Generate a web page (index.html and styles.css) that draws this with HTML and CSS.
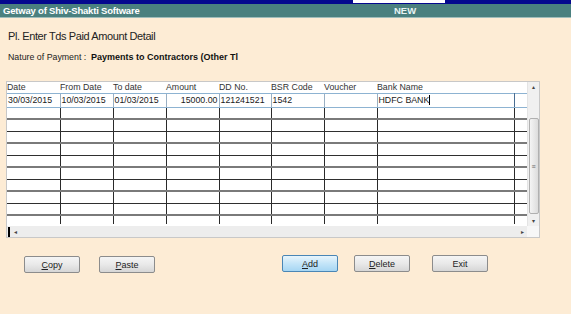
FILE: index.html
```html
<!DOCTYPE html>
<html>
<head>
<meta charset="utf-8">
<link rel="stylesheet" href="styles.css">
</head>
<body>
<div class="topstrip"><div class="topbox"></div></div>
<div class="titlebar">
  <span class="apptitle">Getway of Shiv-Shakti Software</span>
  <span class="mode">NEW</span>
</div>
<div class="content">
  <div class="heading">Pl. Enter Tds Paid Amount Detail</div>
  <div class="nature"><span class="nlabel">Nature of Payment :</span><span class="nvalue">Payments to Contractors (Other Tl</span></div>
  <div class="grid">
    <div class="gridmain">
      <div class="tablewrap">
        <table class="tbl">
          <colgroup>
            <col style="width:53px"><col style="width:53px"><col style="width:53px"><col style="width:53px"><col style="width:52px"><col style="width:53px"><col style="width:53px"><col style="width:137px"><col style="width:14px">
          </colgroup>
          <thead>
            <tr><th>Date</th><th>From Date</th><th>To date</th><th>Amount</th><th>DD No.</th><th>BSR Code</th><th>Voucher</th><th>Bank Name</th><th></th></tr>
          </thead>
          <tbody>
            <tr class="sel"><td>30/03/2015</td><td>10/03/2015</td><td>01/03/2015</td><td class="num">15000.00</td><td>121241521</td><td>1542</td><td></td><td class="edit">HDFC BANK<span class="caret"></span></td><td class="edit2"></td></tr>
            <tr class="ra"><td></td><td></td><td></td><td></td><td></td><td></td><td></td><td></td><td></td></tr>
            <tr class="rb"><td></td><td></td><td></td><td></td><td></td><td></td><td></td><td></td><td></td></tr>
            <tr class="ra"><td></td><td></td><td></td><td></td><td></td><td></td><td></td><td></td><td></td></tr>
            <tr class="rb"><td></td><td></td><td></td><td></td><td></td><td></td><td></td><td></td><td></td></tr>
            <tr class="ra"><td></td><td></td><td></td><td></td><td></td><td></td><td></td><td></td><td></td></tr>
            <tr class="rb"><td></td><td></td><td></td><td></td><td></td><td></td><td></td><td></td><td></td></tr>
            <tr class="ra"><td></td><td></td><td></td><td></td><td></td><td></td><td></td><td></td><td></td></tr>
            <tr class="rb"><td></td><td></td><td></td><td></td><td></td><td></td><td></td><td></td><td></td></tr>
            <tr class="ra"><td></td><td></td><td></td><td></td><td></td><td></td><td></td><td></td><td></td></tr>
            <tr class="last"><td></td><td></td><td></td><td></td><td></td><td></td><td></td><td></td><td></td></tr>
          </tbody>
        </table>
      </div>
      <div class="vscroll">
        <div class="arrow up">&#9652;</div>
        <div class="vtrack"><div class="vthumb"><span class="grip">&#8801;</span></div></div>
        <div class="arrow down">&#9662;</div>
      </div>
    </div>
    <div class="hscroll">
      <span class="hmark"></span>
      <span class="harrow">&#9666;</span>
      <span class="hspacer"></span>
      <span class="harrow">&#9656;</span>
      <span class="corner"></span>
    </div>
  </div>
  <div class="buttons">
    <div class="btngroup left">
      <button class="btn"><u>C</u>opy</button>
      <button class="btn"><u>P</u>aste</button>
    </div>
    <div class="btngroup right">
      <button class="btn primary"><u>A</u>dd</button>
      <button class="btn"><u>D</u>elete</button>
      <button class="btn exit">Exit</button>
    </div>
  </div>
</div>
</body>
</html>
```
FILE: styles.css
```css
* { box-sizing: border-box; }
html, body { margin: 0; padding: 0; }
body {
  width: 571px;
  height: 314px;
  background: #fdecd5;
  font-family: "Liberation Sans", Arial, sans-serif;
  color: #1a1a1a;
  overflow: hidden;
}
.topstrip {
  height: 4px;
  background: #04088e;
  display: flex;
}
.topbox {
  margin-left: 353px;
  width: 92px;
  height: 3px;
  background: #ffffff;
}
.titlebar {
  height: 14px;
  background: #4a807f;
  border-bottom: 1px solid #9fbdbb;
  display: flex;
  align-items: center;
  color: #ffffff;
  font-family: "Liberation Sans", Arial, sans-serif;
  font-weight: bold;
  font-size: 9.5px;
}
.apptitle { margin-left: 3px; width: 391px; letter-spacing: -0.2px; }
.mode { color: #e8f4f4; }
.content { padding: 12px 0 0 0; }
.heading {
  margin-left: 8px;
  font-size: 11px;
  letter-spacing: -0.4px;
  color: #222;
  height: 13px;
  line-height: 13px;
}
.nature {
  margin: 9px 0 0 8px;
  display: flex;
  align-items: baseline;
  height: 12px;
}
.nlabel { font-size: 8.8px; width: 83px; color: #222; }
.nvalue { font-size: 9px; font-weight: bold; color: #111; }
.grid {
  margin: 17px 0 0 6px;
  width: 534px;
  border: 1px solid #c8c8c8;
  background: #ffffff;
}
.gridmain { display: flex; }
.tablewrap {
  width: 521px;
  height: 144px;
  overflow: hidden;
}
.tbl {
  border-collapse: collapse;
  table-layout: fixed;
  width: 521px;
  font-size: 8.8px;
}
.tbl th {
  height: 11px;
  text-align: left;
  font-weight: normal;
  padding: 0;
  color: #333;
  line-height: 10px;
  white-space: nowrap;
  border: none;
}
.tbl td {
  padding: 0 0 0 1px;
  border-left: 1px solid #2a2a2a;
  white-space: nowrap;
  overflow: hidden;
  color: #1a1a1a;
}
.tbl td:first-child { border-left: none; }
.tbl tr.sel td {
  height: 14px;
  border-top: 1px solid #8db3d2;
  border-bottom: 1px solid #8db3d2;
  border-left-color: #9ab0c4;
}
.tbl td.num { text-align: right; padding-right: 1px; }
.tbl td.edit { border: 1px solid #4a6e93; }
.tbl td.edit2 { border: 1px solid #7fa6c9; }
.caret {
  display: inline-block;
  width: 1px;
  height: 10px;
  background: #000;
  vertical-align: -2px;
}
.tbl tr.ra td { height: 12px; border-bottom: 2px solid #7a7a7a; }
.tbl tr.rb td { height: 12px; border-bottom: 1px solid #2f2f2f; }
.tbl tr.last td { height: 9px; }
.vscroll {
  width: 12px;
  height: 144px;
  background: #f0f0f0;
  border-left: 1px solid #e4e4e4;
  display: flex;
  flex-direction: column;
  align-items: center;
}
.arrow {
  height: 10px;
  font-size: 6px;
  line-height: 10px;
  color: #444;
}
.vtrack { flex: 1; width: 12px; padding: 26px 1px 2px 1px; }
.vthumb {
  height: 96px;
  background: linear-gradient(to right, #f4f4f4, #dcdcdc);
  border: 1px solid #b0b0b0;
  border-radius: 2px;
  display: flex;
  align-items: center;
  justify-content: center;
}
.grip { font-size: 7px; color: #666; }
.hscroll {
  height: 11px;
  background: #ededed;
  display: flex;
  align-items: center;
}
.hmark { width: 2px; height: 10px; background: #000; margin-left: 1px; }
.harrow { font-size: 6px; color: #444; width: 10px; text-align: center; }
.hspacer { flex: 1; }
.corner { width: 12px; height: 11px; background: #f7f7f7; }
.buttons {
  margin-top: 17px;
  display: flex;
  align-items: flex-start;
}
.btngroup { display: flex; }
.btngroup.left { margin-left: 24px; gap: 19px; margin-top: 1px; }
.btngroup.right { margin-left: 127px; gap: 16px; }
.btn.exit { margin-left: 6px; }
.btn {
  width: 56px;
  height: 17px;
  padding: 0;
  font-family: "Liberation Sans", Arial, sans-serif;
  font-size: 9px;
  color: #222;
  background: linear-gradient(to bottom, #f5f5f5 0%, #e9e9e9 50%, #d6d6d6 100%);
  border: 1px solid #8c8c8c;
  border-radius: 2px;
}
.btn.primary {
  background: linear-gradient(to bottom, #e8f5fc 0%, #c4e5f8 50%, #a6d6f3 100%);
  border-color: #4a86b5;
}
```
